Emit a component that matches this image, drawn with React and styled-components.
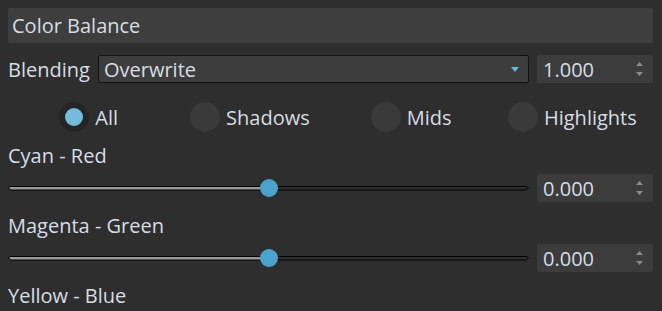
import styled, { createGlobalStyle } from "styled-components";

const GlobalStyle = createGlobalStyle`
   html, body {
      margin: 0;
      background: #2e2e2e;
      overflow: hidden;
   }
   body {
      font-family: "Open Sans", "Noto Sans", sans-serif;
      color: #d7dde4;
   }
`;

const Panel = styled.div`
   width: 662px;
   box-sizing: border-box;
   padding: 8px 9px 0 8px;
   display: flex;
   flex-direction: column;
   & > * {
      flex-shrink: 0;
   }
`;
const TitleBar = styled.div`
   height: 35px;
   background: #3e3e3e;
   border-radius: 2px;
   display: flex;
   align-items: center;
   padding-left: 4px;
   font-size: 20px;
   margin-bottom: 12px;
`;
const Row = styled.div`
   display: flex;
   align-items: center;
   height: 28px;
   margin-bottom: ${(props) => props.mb || "0"};
`;
const Label = styled.span`
   font-size: 20px;
   width: 90px;
   flex-shrink: 0;
`;
const Dropdown = styled.div`
   flex: 1;
   height: 28px;
   box-sizing: border-box;
   border: 1px solid #111111;
   border-radius: 2px;
   background: #3d3d3d;
   display: flex;
   align-items: center;
   justify-content: space-between;
   padding: 0 9px 0 5px;
   font-size: 20px;
   margin-right: 8px;
`;
const SpinBox = styled.div`
   width: 116px;
   height: 28px;
   box-sizing: border-box;
   border-radius: 2px;
   background: #3c3c3c;
   display: flex;
   align-items: center;
   justify-content: space-between;
   padding: 0 10px 0 6px;
   font-size: 20px;
   flex-shrink: 0;
`;
const Arrows = styled.div`
   display: flex;
   flex-direction: column;
   gap: 6px;
`;
const RadioRow = styled.div`
   display: grid;
   grid-template-columns: repeat(4, 1fr);
   height: 30px;
   margin-bottom: 8px;
`;
const RadioItem = styled.div`
   display: flex;
   align-items: center;
   justify-content: center;
   gap: 6px;
   font-size: 20px;
`;
const RadioCircle = styled.div`
   width: 30px;
   height: 30px;
   border-radius: 50%;
   background: ${(props) => (props.checked ? "#252525" : "#3a3a3a")};
   display: flex;
   align-items: center;
   justify-content: center;
   &::after {
      content: "";
      width: 18px;
      height: 18px;
      border-radius: 50%;
      background: ${(props) => (props.checked ? "#74bbdc" : "transparent")};
   }
`;
const SectionLabel = styled.div`
   height: 30px;
   display: flex;
   align-items: center;
   font-size: 20px;
   margin-bottom: 4px;
`;
const SliderWrap = styled.div`
   position: relative;
   flex: 1;
   height: 28px;
   margin-right: 8px;
   display: flex;
   align-items: center;
`;
const Track = styled.div`
   width: 100%;
   height: 5px;
   background: #000000;
   clip-path: polygon(0 50%, 3px 0, calc(100% - 3px) 0, 100% 50%, calc(100% - 3px) 100%, 3px 100%);
   display: flex;
   align-items: center;
   padding: 0 1px;
   box-sizing: border-box;
`;
const TrackInner = styled.div`
   width: 100%;
   height: 3px;
   clip-path: polygon(0 50%, 2px 0, calc(100% - 2px) 0, 100% 50%, calc(100% - 2px) 100%, 2px 100%);
`;
const Thumb = styled.div`
   position: absolute;
   top: 50%;
   width: 18px;
   height: 18px;
   border-radius: 50%;
   background: #4ba3cd;
   transform: translate(-50%, -50%);
`;
const SliderBlock = styled.div`
   display: flex;
   flex-direction: column;
   margin-bottom: 8px;
`;

const SpinArrows = () => (
   <Arrows>
      <svg width="7" height="4" viewBox="0 0 7 4">
         <path d="M0 4 L3.5 0 L7 4 Z" fill="#8a8a8a" />
      </svg>
      <svg width="7" height="4" viewBox="0 0 7 4">
         <path d="M0 0 L3.5 4 L7 0 Z" fill="#8a8a8a" />
      </svg>
   </Arrows>
);

const Slider = ({ value }) => {
   const pct = value * 100;
   return (
      <SliderWrap>
         <Track>
            <TrackInner
               style={{
                  background: `linear-gradient(90deg, #9a9a9a ${pct}%, #2e2e2e ${pct}%)`,
               }}
            />
         </Track>
         <Thumb style={{ left: `${pct}%` }} />
      </SliderWrap>
   );
};

const sliders = [
   { label: "Cyan - Red", value: 0.5 },
   { label: "Magenta - Green", value: 0.5 },
];

const modes = ["All", "Shadows", "Mids", "Highlights"];

export default function App() {
   return (
      <Panel>
         <GlobalStyle />
         <TitleBar>Color Balance</TitleBar>
         <Row mb="19px">
            <Label>Blending</Label>
            <Dropdown>
               <span>Overwrite</span>
               <svg width="8" height="5" viewBox="0 0 8 5">
                  <path d="M0 0 L8 0 L4 5 Z" fill="#6cb6da" />
               </svg>
            </Dropdown>
            <SpinBox>
               <span>1.000</span>
               <SpinArrows />
            </SpinBox>
         </Row>
         <RadioRow>
            {modes.map((m, i) => (
               <RadioItem key={m}>
                  <RadioCircle checked={i === 0} />
                  <span>{m}</span>
               </RadioItem>
            ))}
         </RadioRow>
         {sliders.map((s) => (
            <SliderBlock key={s.label}>
               <SectionLabel>{s.label}</SectionLabel>
               <Row>
                  <Slider value={s.value} />
                  <SpinBox>
                     <span>0.000</span>
                     <SpinArrows />
                  </SpinBox>
               </Row>
            </SliderBlock>
         ))}
         <SectionLabel>Yellow - Blue</SectionLabel>
      </Panel>
   );
}
